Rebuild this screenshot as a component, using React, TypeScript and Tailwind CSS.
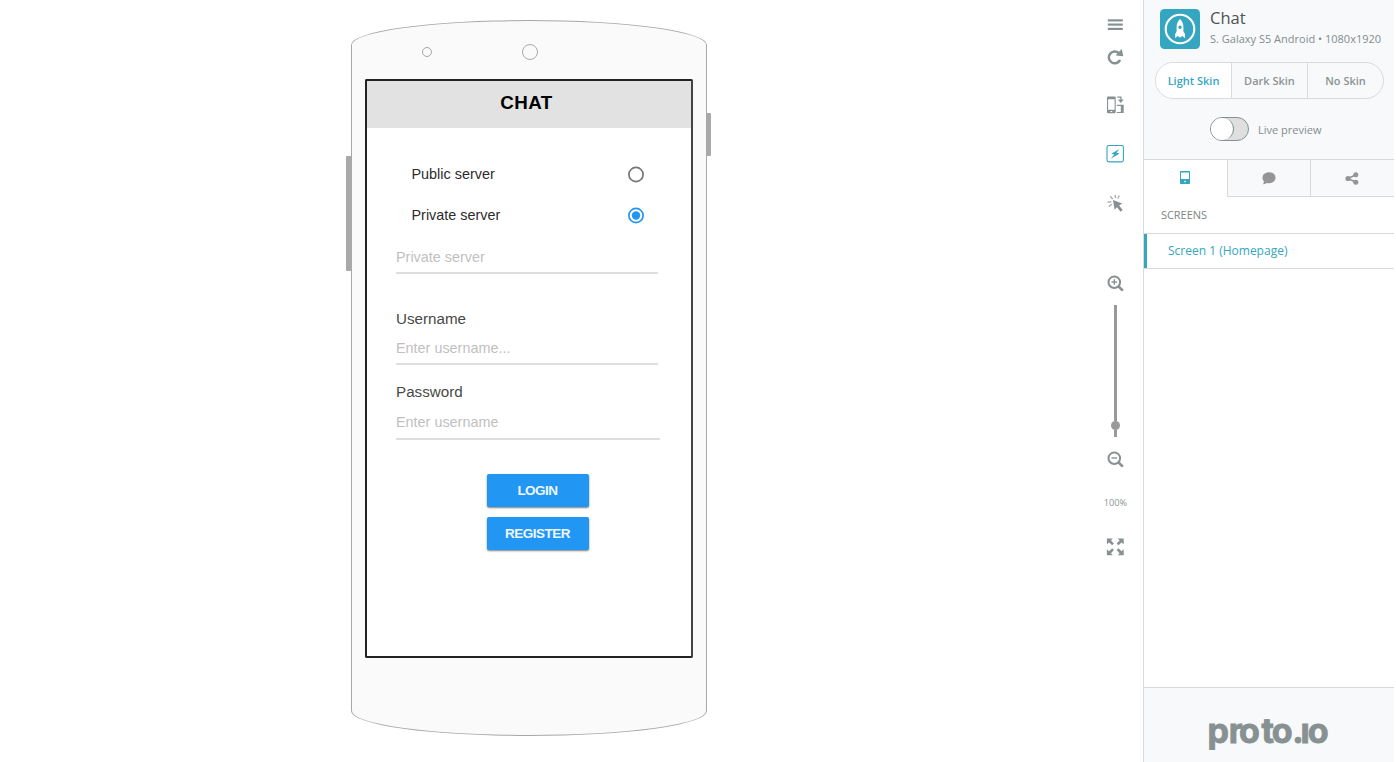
import React from "react";

function MenuIcon() {
  return (
    <svg width="16" height="12" viewBox="-0.5 0 16 12" fill="#879192">
      <rect x="0.3" y="0.3" width="15" height="2.2" />
      <rect x="0.3" y="4.5" width="15" height="2.2" />
      <rect x="0.3" y="8.8" width="15" height="2.2" />
    </svg>
  );
}

function ReloadIcon() {
  return (
    <svg width="18" height="16" viewBox="-0.5 0 18 16">
      <path d="M12.2 4A5.9 5.9 0 1 0 13.6 10.9" fill="none" stroke="#879192" strokeWidth="2.5" />
      <path d="M15.2 0L16.8 7.2L9.1 6.6Z" fill="#879192" />
    </svg>
  );
}

function RotateIcon() {
  return (
    <svg width="18" height="18" viewBox="-0.5 0 18 18">
      <path fillRule="evenodd" d="M1.5 0.4H8.2Q9.2 0.4 9.2 1.4V16.2Q9.2 17.2 8.2 17.2H1.5Q0.5 17.2 0.5 16.2V1.4Q0.5 0.4 1.5 0.4ZM1.6 3.2V13.7H8.1V3.2ZM4 14.9V16.1H5.7V14.9Z" fill="#879192" />
      <path d="M10.8 1.2H14.4V4" fill="none" stroke="#879192" strokeWidth="1.3" />
      <path d="M11.4 3.6H17.2L14.3 6.9Z" fill="#879192" />
      <path fillRule="evenodd" d="M10.3 8.8H17.2V17H10.3V15.9H14.3V10H10.3Z" fill="#879192" />
    </svg>
  );
}

function BoltIcon() {
  return (
    <svg width="18" height="18" viewBox="-0.5 0 18 18">
      <rect x="0.5" y="0.5" width="16.4" height="16.4" rx="1.8" fill="none" stroke="#35a6c0" strokeWidth="1.1" />
      <path d="M13 4L4.7 8.8L7.8 9.5L4.2 13.8L13.2 8.5L10 7.8Z" fill="#35a6c0" />
    </svg>
  );
}

function ClickIcon() {
  return (
    <svg width="18" height="20" viewBox="-0.5 0 18 20">
      <path d="M6.4 6L15.8 9.6L12.6 11.4L16.2 15.9L14 17.8L10.5 13.2L8.2 15.8Z" fill="#879192" />
      <path d="M1 8.2L4.9 7.8M3.8 2.4L6.2 5M8.6 1L9 4.2M12.8 1.6L11.4 4.6M2.5 12.5L5.2 10.3" stroke="#9da5a6" strokeWidth="1.3" />
    </svg>
  );
}

function ZoomIcon({ plus }: { plus?: boolean }) {
  return (
    <svg width="18" height="18" viewBox="-0.5 0 18 18" fill="none" stroke="#879192">
      <circle cx="7.8" cy="7.2" r="5.8" strokeWidth="2" />
      <path d="M12 11.4L16.3 15.6" strokeWidth="2.7" />
      <path d="M5 7H10.6" strokeWidth="1.4" />
      {plus && <path d="M7.8 4.2V9.8" strokeWidth="1.4" />}
    </svg>
  );
}

function ExpandIcon() {
  return (
    <svg width="18" height="18" viewBox="-0.3 0.2 18 18">
      <path d="M0.6 0.6H6.5L4.7 2.6L7.6 5.8L5.8 7.5L2.8 4.6L0.6 6.5ZM17.4 0.6V6.5L15.2 4.6L12.2 7.5L10.4 5.8L13.3 2.6L11.5 0.6ZM0.6 17.4V11.5L2.8 13.4L5.8 10.5L7.6 12.2L4.7 15.4L6.5 17.4ZM17.4 17.4H11.5L13.3 15.4L10.4 12.2L12.2 10.5L15.2 13.4L17.4 11.5Z" fill="#879192" />
    </svg>
  );
}

function RocketIcon() {
  return (
    <svg width="40" height="40" viewBox="0 0 40 40">
      <rect width="40" height="40" rx="4.5" fill="#35a6c0" />
      <circle cx="20" cy="20" r="14.3" fill="none" stroke="#fff" strokeWidth="2.1" />
      <path fillRule="evenodd" d="M20 10C22.3 12.4 23.4 15 23.4 18V22.5L25 25V29.2L22.4 27H21.5V28.3H18.5V27H17.6L15.2 29.2V25L16.6 22.5V18C16.6 15 17.7 12.4 20 10ZM20 16.6A1.7 1.7 0 1 0 20 20A1.7 1.7 0 1 0 20 16.6Z" fill="#fff" />
    </svg>
  );
}

function TabletIcon() {
  return (
    <svg width="10" height="13" viewBox="0 0 10 13">
      <path fillRule="evenodd" d="M0.5 0H9.5L10 0.5V12.5L9.5 13H0.5L0 12.5V0.5ZM1 1.4V8H9V1.4ZM4.3 9.8V11.2H5.7V9.8Z" fill="#35a6c0" />
    </svg>
  );
}

function CommentIcon() {
  return (
    <svg width="14" height="13" viewBox="0 0 14 13">
      <path d="M7 0.3C10.7 0.3 13.5 2.6 13.5 5.7S10.7 11.2 7 11.2Q5.7 11.2 4.6 10.9Q3.2 12.2 1 12.2Q2 11 1.8 9.3Q0.5 7.8 0.5 5.7C0.5 2.6 3.3 0.3 7 0.3Z" fill="#959595" />
    </svg>
  );
}

function ShareIcon() {
  return (
    <svg width="14" height="13" viewBox="0 0 14 13">
      <path d="M11 2.8L3 6.5L11 10.2" fill="none" stroke="#959595" strokeWidth="1.7" />
      <g fill="#959595">
        <circle cx="10.8" cy="2.7" r="2.5" />
        <circle cx="3" cy="6.5" r="2.6" />
        <circle cx="10.8" cy="10.3" r="2.5" />
      </g>
    </svg>
  );
}

function Radio({ label, checked }: { label: string; checked?: boolean }) {
  return (
    <div className="flex h-[41px] items-center justify-between pr-[47px] pl-[44.5px]">
      <span className="text-[14.4px] text-[#2c2c2c]">{label}</span>
      <svg className="-mt-px" width="16" height="17" viewBox="0 -0.5 16 17" fill="none">
        <circle cx="8" cy="8" r="7.1" stroke={checked ? "#2196f3" : "#757575"} strokeWidth="1.7" />
        {checked && <circle cx="8" cy="8" r="4.2" fill="#2196f3" />}
      </svg>
    </div>
  );
}

function Phone() {
  return (
    <div className="relative mt-[20px] ml-[351px] flex h-[716px] w-[356px] shrink-0 flex-col rounded-[178px/25px] border border-[#a8a8a8] bg-[#fafafa]">
      <div className="absolute top-[135px] -left-[6px] h-[115px] w-[5px] rounded-l-[1px] bg-[#a9a9a9]" />
      <div className="absolute top-[92px] -right-[5px] h-[43px] w-[4px] rounded-r-[1px] bg-[#a9a9a9]" />
      <div className="flex h-[58px] items-center pt-[4px] pl-[70px]">
        <div className="h-[10px] w-[10px] rounded-full border border-[#a8a8a8]" />
        <div className="ml-[90px] h-[16px] w-[16px] rounded-full border border-[#a8a8a8]" />
      </div>
      <div className="ml-[13px] flex h-[579px] w-[328px] flex-col rounded-[2px] border-2 border-[#222] border-r-[#444] bg-white font-['Liberation_Sans',sans-serif]">
        <div className="flex h-[47px] items-center justify-center bg-[#e2e2e2] pr-[5px] pb-[2px] text-[18.8px] font-bold tracking-[0.4px] text-black">
          CHAT
        </div>
        <div className="pt-[26px]">
          <Radio label="Public server" />
          <Radio label="Private server" checked />
        </div>
        <div className="mt-[4px] ml-[29px] h-[34px] w-[261.5px] border-b-2 border-[#dedede] text-[14.4px] leading-[34px] text-[#bfbfbf]">Private server</div>
        <div className="mt-[34px] ml-[29px] h-[23px] text-[15.2px] leading-[22px] text-[#484848]">Username</div>
        <div className="ml-[29px] h-[34px] w-[261.5px] border-b-2 border-[#dedede] text-[14.4px] leading-[34px] text-[#bfbfbf]">Enter username...</div>
        <div className="mt-[15px] ml-[29px] h-[24px] text-[15.2px] leading-[23px] text-[#484848]">Password</div>
        <div className="ml-[29px] h-[35.5px] w-[264px] border-b-2 border-[#dedede] text-[14.4px] leading-[36px] text-[#bfbfbf]">Enter username</div>
        <div className="mt-[34.5px] ml-[119.5px] flex w-[102px] flex-col gap-[10px]">
          <button className="h-[33px] rounded-[2px] bg-[#2196f3] text-[13.5px] leading-none font-bold tracking-[-0.5px] text-[#eef7ff] shadow-[0_1px_2px_rgba(0,0,0,0.5)]">LOGIN</button>
          <button className="h-[33px] rounded-[2px] bg-[#2196f3] text-[13.5px] leading-none font-bold tracking-[-0.5px] text-[#eef7ff] shadow-[0_1px_2px_rgba(0,0,0,0.5)]">REGISTER</button>
        </div>
      </div>
    </div>
  );
}

function Toolbar() {
  return (
    <nav className="flex w-[55px] shrink-0 flex-col items-center pt-[19px] pr-px">
      <MenuIcon />
      <div className="mt-[18px]"><ReloadIcon /></div>
      <div className="mt-[31px]"><RotateIcon /></div>
      <div className="mt-[31px]"><BoltIcon /></div>
      <div className="mt-[31px]"><ClickIcon /></div>
      <div className="mt-[61px]"><ZoomIcon plus /></div>
      <div className="mt-[12px] ml-px flex h-[132px] w-[9px] flex-col items-center">
        <div className="h-[116px] w-[3px] bg-[#999]" />
        <div className="h-[9px] w-[9px] shrink-0 rounded-full bg-[#999]" />
        <div className="w-[3px] grow bg-[#999]" />
      </div>
      <div className="mt-[14px]"><ZoomIcon /></div>
      <span className="mt-[28px] ml-px h-[12px] text-[9.2px] leading-[12px] text-[#8e9696]">100%</span>
      <div className="mt-[29px]"><ExpandIcon /></div>
    </nav>
  );
}

function Sidebar() {
  return (
    <aside className="flex w-[251px] shrink-0 flex-col border-l border-[#d8dada]">
      <header className="flex h-[159px] flex-col bg-[#f7f9fb]">
        <div className="flex h-[62px] gap-[10px] pt-[9px] pl-[16px]">
          <RocketIcon />
          <div className="-mt-[2px] whitespace-nowrap">
            <h1 className="text-[16.5px] leading-[22px] text-[#4f5354]">Chat</h1>
            <p className="text-[11px] leading-[19px] text-[#858d8d]">S. Galaxy S5 Android • 1080x1920</p>
          </div>
        </div>
        <div className="ml-[11px] flex h-[37px] w-[229px] overflow-hidden rounded-full border border-[#d8dbdc] text-[11px] font-semibold text-[#8b9393]">
          <div className="flex w-[76px] items-center justify-center border-r border-[#d8dbdc] bg-white pt-px text-[#35a6c0]">Light Skin</div>
          <div className="flex w-[76px] items-center justify-center border-r border-[#d8dbdc] pt-px">Dark Skin</div>
          <div className="flex flex-1 items-center justify-center pt-px">No Skin</div>
        </div>
        <div className="mt-[18px] ml-[66px] flex items-center gap-[9px]">
          <div className="h-[24px] w-[39px] rounded-full border border-[#879192] bg-[#dfdfdf]">
            <div className="h-[22px] w-[23px] rounded-full border-r border-[#879192] bg-white" />
          </div>
          <span className="pt-[2px] text-[11px] text-[#858d8d]">Live preview</span>
        </div>
      </header>
      <div className="grid h-[38px] shrink-0 grid-cols-[84px_83px_83px] border-t border-[#d8dada]">
        <div className="flex items-center justify-center border-r border-[#d8dada] pr-px pb-[2px]"><TabletIcon /></div>
        <div className="flex items-center justify-center border-r border-b border-[#d8dada] bg-[#f7f9fb]"><CommentIcon /></div>
        <div className="flex items-center justify-center border-b border-[#d8dada] bg-[#f7f9fb] pr-px"><ShareIcon /></div>
      </div>
      <h2 className="h-[36px] pl-[17px] text-[11px] leading-[36px] tracking-[-0.05px] text-[#7d8686]">SCREENS</h2>
      <div className="flex h-[36px] border-y border-[#d8dada]">
        <div className="w-[3px] bg-[#35a6c0]" />
        <span className="pl-[21px] text-[12px] leading-[34px] text-[#35a6c0]">Screen 1 (Homepage)</span>
      </div>
      <footer className="mt-auto flex h-[75px] justify-center border-t border-[#d8dada] bg-[#f7f9fb] pt-[12px]">
        <svg width="130" height="60" viewBox="-4 0 130 60">
          <text x="-0.6 20.8 31 53.6 63.8 84.3 92.4 99.8" y="43" fill="#879192" stroke="#879192" strokeWidth="0.9" fontFamily="Inter, sans-serif" fontSize="34" fontWeight="700">proto.ıo</text>
        </svg>
      </footer>
    </aside>
  );
}

export default function App() {
  return (
    <div className="flex h-[762px] w-[1396px] overflow-hidden bg-white font-['Open_Sans',sans-serif]">
      <main className="flex w-[1088px] shrink-0">
        <Phone />
      </main>
      <Toolbar />
      <Sidebar />
    </div>
  );
}
